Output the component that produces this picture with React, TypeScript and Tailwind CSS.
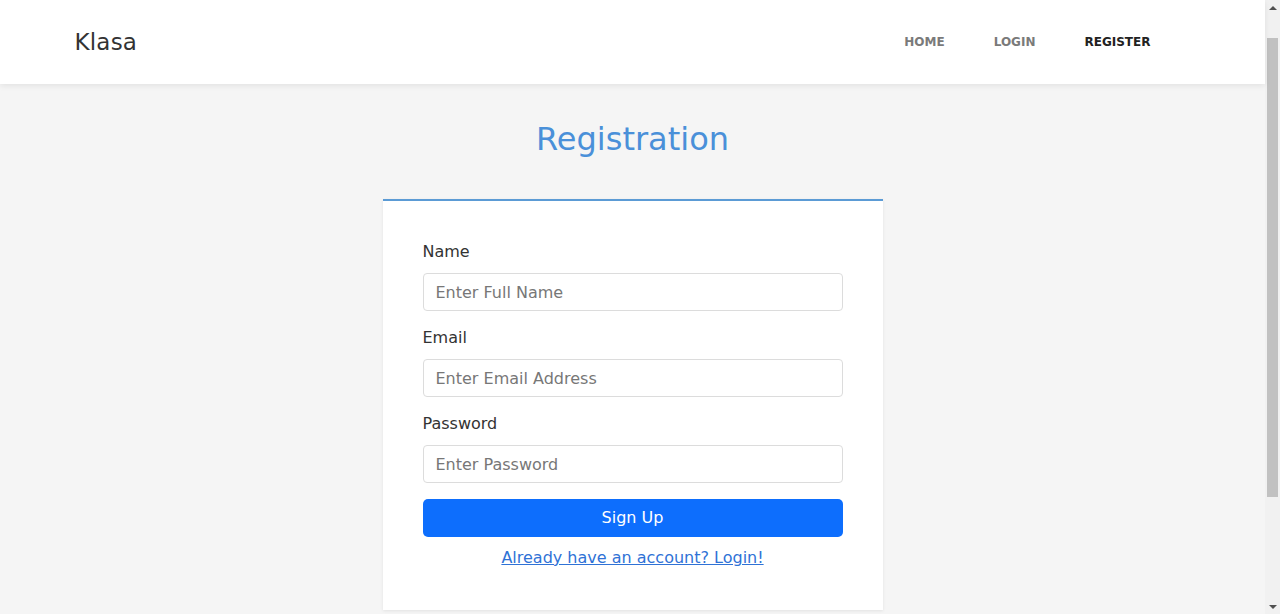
import { useState } from "react";

const font = { fontFamily: '"DejaVu Sans", "Liberation Sans", sans-serif' };

const Field = ({
  label,
  type,
  placeholder,
  value,
  onChange,
}: {
  label: string;
  type: string;
  placeholder: string;
  value: string;
  onChange: (v: string) => void;
}) => (
  <div className="mb-[15px]">
    <label className="block text-[16px] leading-6 text-[#333] mb-[9px]">{label}</label>
    <input
      type={type}
      placeholder={placeholder}
      value={value}
      onChange={(e) => onChange(e.target.value)}
      className="block w-full h-[38px] px-[12px] text-[16px] text-[#333] bg-white border border-[#dcdcdc] rounded-[4px] outline-none placeholder:text-[#777] focus:border-[#86b7fe]"
    />
  </div>
);

// fake browser scrollbar, the page in the shot is a bit taller than the window
const Scrollbar = () => (
  <div className="w-[15px] shrink-0 bg-[#f1f1f1] flex flex-col items-center">
    <div className="h-[15px] flex items-center justify-center">
      <div className="w-0 h-0 border-l-[4px] border-r-[4px] border-b-[4px] border-l-transparent border-r-transparent border-b-[#505050]" />
    </div>
    <div className="flex-1 w-full px-[2px] pt-[23px] pb-[102px]">
      <div className="h-full w-full bg-[#c1c1c1]" />
    </div>
    <div className="h-[15px] flex items-center justify-center">
      <div className="w-0 h-0 border-l-[4px] border-r-[4px] border-t-[4px] border-l-transparent border-r-transparent border-t-[#505050]" />
    </div>
  </div>
);

export default function App() {
  const [name, setName] = useState("");
  const [email, setEmail] = useState("");
  const [password, setPassword] = useState("");

  return (
    <div className="h-screen flex overflow-hidden bg-[#f5f5f5]" style={font}>
      <div className="flex-1 min-w-0">
        <header className="h-[84px] bg-white shadow-[0_2px_6px_rgba(0,0,0,0.08)] relative">
          <div className="max-w-[1140px] mx-auto h-full px-3 flex items-center justify-between">
            <a href="#" className="text-[23px] text-[#333] tracking-[0.2px]">
              Klasa
            </a>
            <nav className="flex items-center gap-[49px] pr-[40px] text-[12px] font-bold uppercase">
              <a href="#" className="text-[#7a7a7a]">Home</a>
              <a href="#" className="text-[#7a7a7a]">Login</a>
              <a href="#" className="text-[#222]">Register</a>
            </nav>
          </div>
        </header>

        <main>
          <h1 className="mt-[35px] text-center text-[32px] leading-10 text-[#4a90d9]">Registration</h1>

          <div className="w-[500px] mx-auto mt-[40px] bg-white border-t-2 border-[#5b9bd5] shadow-[0_1px_3px_rgba(0,0,0,0.08)] px-10 pt-[39px] pb-[40px]">
            <form onSubmit={(e) => e.preventDefault()}>
              <Field label="Name" type="text" placeholder="Enter Full Name" value={name} onChange={setName} />
              <Field label="Email" type="email" placeholder="Enter Email Address" value={email} onChange={setEmail} />
              <Field label="Password" type="password" placeholder="Enter Password" value={password} onChange={setPassword} />
              <button
                type="submit"
                className="block w-full h-[38px] mt-[16px] rounded-[5px] bg-[#0d6efd] text-white text-[16px]"
              >
                Sign Up
              </button>
              <div className="mt-[9px] text-center leading-6">
                <a href="#" className="text-[16px] text-[#2f72d6] underline">
                  Already have an account? Login!
                </a>
              </div>
            </form>
          </div>
        </main>
      </div>
      <Scrollbar />
    </div>
  );
}
